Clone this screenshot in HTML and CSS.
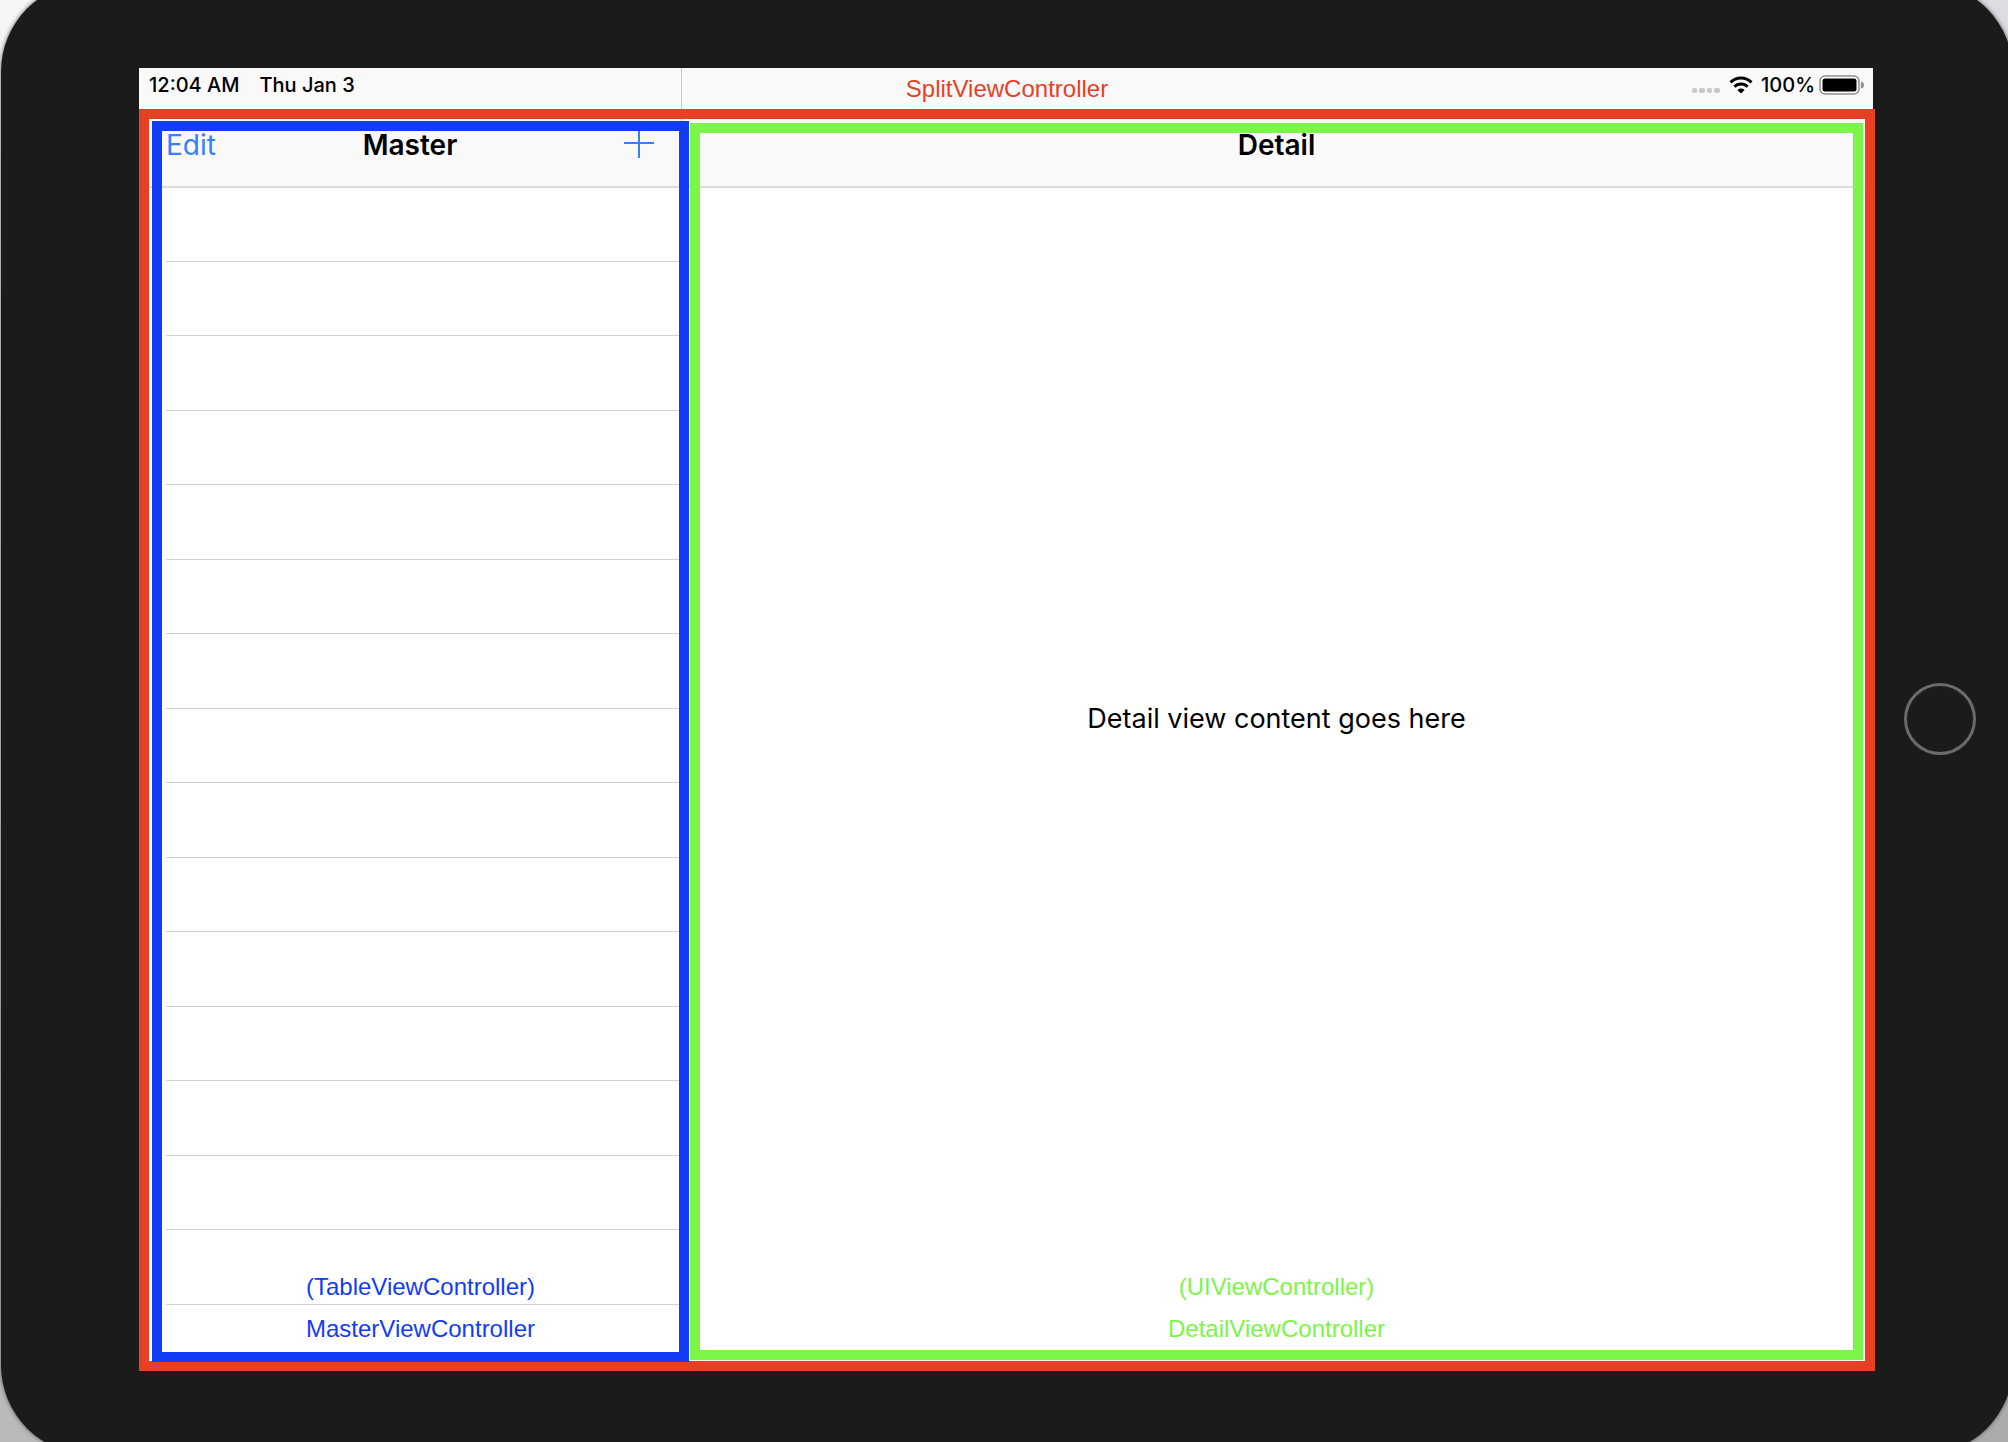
FILE: index.html
```
<!DOCTYPE html>
<html lang="en">
<head>
<meta charset="utf-8">
<meta name="viewport" content="width=device-width, initial-scale=1">
<title>SplitViewController</title>
<link rel="stylesheet" href="styles.css">
</head>
<body>
<div class="device">
  <div class="screen">
    <header class="status">
      <div class="status-left"><span>12:04 AM</span><span>Thu Jan 3</span></div>
      <div class="note note-split">SplitViewController</div>
      <div class="status-right">
        <svg class="dots" width="30" height="20" viewBox="0 0 30 20" aria-hidden="true" fill="#c8c8c8"><rect x="1" y="13" width="5" height="5" rx="2"/><rect x="8" y="13" width="6" height="5" rx="2"/><rect x="16" y="13" width="5" height="5" rx="2"/><rect x="23" y="13" width="6" height="5" rx="2"/></svg>
        <svg class="wifi" width="24" height="20" viewBox="0 0 24 20" aria-hidden="true" fill="none" stroke="#000"><path stroke-width="3" d="M1.5 7.4a15 15 0 0 1 21 0"/><path stroke-width="3" d="M5.4 11.7a9.4 9.4 0 0 1 13.2 0"/><path fill="#000" stroke="none" d="M12 18.5 8.4 15a5.1 5.1 0 0 1 7.2 0z"/></svg>
        <span>100%</span>
        <svg class="battery" width="46" height="20" viewBox="0 0 46 20" aria-hidden="true"><rect x="1" y="1" width="39" height="18" rx="5" fill="#fff" stroke="#8e8e8e" stroke-width="1.5"/><rect x="3.5" y="3.5" width="34" height="13" rx="2.5" fill="#000"/><path d="M42 6.5q3 1 3 3.5t-3 3.5z" fill="#8e8e8e"/></svg>
      </div>
    </header>
    <main class="split">
      <section class="pane master">
        <div class="nav">
          <button class="nav-button" type="button">Edit</button>
          <h1 class="title">Master</h1>
          <button class="nav-button add" type="button" aria-label="Add"><svg width="30" height="30" viewBox="0 0 30 30" fill="none" stroke="#3880f7" stroke-width="2"><path d="M0 15h30M15 0v30"/></svg></button>
        </div>
        <ul class="rows">
          <li></li><li></li><li></li><li></li><li></li><li></li><li></li><li></li><li></li><li></li><li></li><li></li><li></li><li></li><li></li>
        </ul>
        <div class="caption note"><p>(TableViewController)</p><p>MasterViewController</p></div>
      </section>
      <section class="pane detail">
        <div class="nav"><h2 class="title">Detail</h2></div>
        <p class="content">Detail view content goes here</p>
        <div class="caption note"><p>(UIViewController)</p><p>DetailViewController</p></div>
      </section>
    </main>
  </div>
  <div class="bezel"><button class="home" type="button" aria-label="Home"></button></div>
</div>
</body>
</html>
```
FILE: styles.css
```
* { box-sizing: border-box; }
body {
  margin: 0;
  height: 100vh;
  overflow: hidden;
  display: flex;
  background:
    linear-gradient(#f6f6f6, #b9b9b9) left / 50% 100% no-repeat,
    linear-gradient(#dcdde2, #acacae);
  font-family: Inter, "Liberation Sans", sans-serif;
  color: #000;
}
h1, h2, p, ul { margin: 0; padding: 0; }
button { border: 0; padding: 0; background: none; font: inherit; }

/* The shell runs a little past the window's top and bottom edges. */
.device {
  flex: 1;
  display: flex;
  margin: -18px -5px -13px 1px;
  padding: 86px 0 84px 138px;
  border-radius: 90px;
  background: #1b1b1b;
  box-shadow: 0 0 4px #555;
}
.screen { flex: 1; display: flex; flex-direction: column; }

.status {
  position: relative;
  height: 41px;
  padding: 0 8px 0 10px;
  display: grid;
  grid-template-columns: 1fr auto 1fr;
  background: #f9f9f9;
  font-size: 20px;
  font-weight: 500;
  line-height: 34px;
}
.status::after {
  content: "";
  position: absolute;
  left: 542px;
  top: 0;
  bottom: 0;
  width: 1px;
  background: #c8c8c8;
}
.status-left { display: flex; gap: 20px; }
.status-right { display: flex; justify-content: flex-end; align-items: center; height: 34px; }
.dots { margin-right: 8px; }
.wifi { margin-right: 8px; }
.battery { margin-left: 4px; }
.note {
  font-family: "Liberation Sans", Arial, sans-serif;
  font-size: 24px;
  font-weight: 400;
  line-height: 42px;
  text-align: center;
}
.note-split { color: #e84025; }

.split {
  flex: 1;
  display: flex;
  gap: 1px;
  margin-right: -2px;
  padding: 2px 2px 0 3px;
  border: 10px solid #e84025;
  background:
    linear-gradient(#c8c8c8, #c8c8c8) 532px 0 / 1px 67px no-repeat,
    linear-gradient(#f9f9f9 67px, #dcdcdc 67px, #dcdcdc 69px, #fff 69px);
}
.pane { display: flex; flex-direction: column; position: relative; }
.master { flex: 0 0 537px; margin-bottom: -1px; border: 10px solid #133cf6; color: #133cf6; }
.detail { flex: 1; margin: 2px 0 1px; border: 10px solid #7cf549; color: #7cf549; }

.nav {
  flex: none;
  height: 57px;
  padding: 0 25px 0 4px;
  display: grid;
  grid-template-columns: 1fr auto 1fr;
  align-items: start;
}
.detail .nav { height: 55px; grid-template-columns: 1fr; text-align: center; padding: 0; }
.title { font-size: 28px; font-weight: 600; line-height: 28px; color: #000; }
.detail .title { line-height: 24px; }
.nav-button { justify-self: start; font-size: 28px; line-height: 28px; color: #3880f7; }
.add { justify-self: end; height: 27px; overflow: hidden; display: flex; align-items: flex-end; }
.add svg { flex: none; }

.rows {
  flex: 1;
  display: flex;
  flex-direction: column;
  list-style: none;
  margin-top: -1px;
  padding: 0 0 47px 4px;
}
.rows li { flex: 1; border-bottom: 1px solid #d2d2d4; }
.caption { position: absolute; left: 0; right: 0; bottom: 2px; }
.detail .caption { bottom: 0; }
.content {
  flex: 1;
  display: grid;
  place-items: center;
  padding-bottom: 100px;
  font-size: 27px;
  line-height: 36px;
  color: #000;
}

.bezel {
  flex: 0 0 140px;
  display: grid;
  place-items: center;
  padding: 0 6px 2px 0;
}
.home { width: 72px; height: 72px; border: 3px solid #6b6b6b; border-radius: 50%; }
```
